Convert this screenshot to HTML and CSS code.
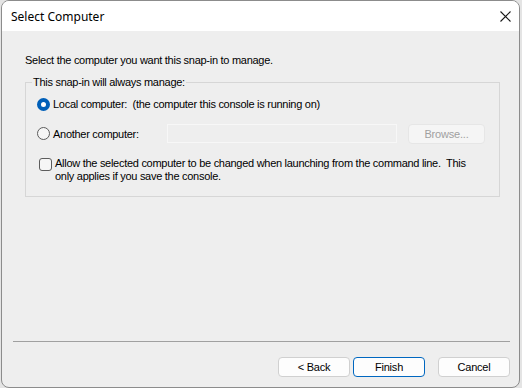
FILE: index.html
```html
<!DOCTYPE html>
<html lang="en">
<head>
  <meta charset="UTF-8">
  <meta name="viewport" content="width=device-width, initial-scale=1.0">
  <title>Select Computer</title>
  <link rel="stylesheet" href="styles.css">
</head>
<body>
  <div class="window">
    <div class="titlebar">
      <span class="title">Select Computer</span>
      <button class="close" aria-label="Close">
        <svg width="11" height="11" viewBox="0 0 11 11">
          <path d="M0.5 0.5 L10.5 10.5 M10.5 0.5 L0.5 10.5" stroke="#1a1a1a" stroke-width="1.1" fill="none"/>
        </svg>
      </button>
    </div>

    <div class="content">
      <p class="intro">Select the computer you want this snap-in to manage.</p>

      <fieldset class="group">
        <legend>This snap-in will always manage:</legend>

        <div class="row first">
          <input type="radio" name="target" id="local" checked>
          <label for="local">Local computer:&nbsp; (the computer this console is running on)</label>
        </div>

        <div class="row second">
          <input type="radio" name="target" id="another">
          <label for="another" class="fixed">Another computer:</label>
          <input type="text" class="computer-name" disabled>
          <button class="btn browse" disabled>Browse...</button>
        </div>

        <div class="row third">
          <input type="checkbox" id="allow">
          <label for="allow">Allow the selected computer to be changed when launching from the command line.&nbsp; This only applies if you save the console.</label>
        </div>
      </fieldset>

      <div class="footer">
        <button class="btn">&lt; Back</button>
        <button class="btn primary">Finish</button>
        <button class="btn cancel">Cancel</button>
      </div>
    </div>
  </div>
</body>
</html>
```

FILE: styles.css
```css
body {
  margin: 0;
  background-color: #e4e4e4;
  font-family: "Liberation Sans", Arial, sans-serif;
  font-size: 11px;
  letter-spacing: -0.28px;
  color: #000;
}

.window {
  box-sizing: border-box;
  width: 519px;
  height: 388px;
  margin-left: 1px;
  border: 1px solid #8c8c8c;
  border-radius: 8px;
  overflow: hidden;
  display: flex;
  flex-direction: column;
  background-color: #eeeeee;
}

.titlebar {
  height: 30px;
  background-color: #fff;
  display: flex;
  align-items: center;
  padding-left: 9px;
  padding-right: 8px;
}

.title {
  font-family: "Noto Sans", sans-serif;
  font-size: 12px;
  letter-spacing: 0;
  flex: 1;
}

.close {
  border: none;
  background: none;
  padding: 0;
  width: 11px;
  height: 11px;
  display: flex;
}

.content {
  flex: 1;
  display: flex;
  flex-direction: column;
  padding: 22px 19px 0 23px;
}

.intro {
  margin: 0;
  line-height: 14px;
}

.group {
  margin: 8px 0 0 0;
  padding: 6px 10px 13px 11px;
  border: 1px solid #d6d6d6;
  min-width: 0;
}

.group legend {
  padding: 0 1px;
  margin-left: -5px;
  line-height: 14px;
}

.row {
  display: flex;
  align-items: center;
}

.row.first {
  height: 18px;
}

.row.second {
  height: 19px;
  margin-top: 11px;
}

.row.third {
  align-items: flex-start;
  margin-top: 14px;
  line-height: 13px;
}

.row label {
  margin-left: 3px;
}

.row.third label {
  max-width: 425px;
}

.row label.fixed {
  width: 114px;
}

input[type="radio"] {
  appearance: none;
  margin: 0;
  width: 13px;
  height: 13px;
  border-radius: 50%;
  border: 1px solid #5c5c5c;
  background-color: #f6f6f6;
  box-sizing: border-box;
}

input[type="radio"]:checked {
  border: 4px solid #005fb8;
  background-color: #fff;
}

input[type="checkbox"] {
  appearance: none;
  margin: 1px 0 0 2px;
  width: 13px;
  height: 13px;
  border-radius: 3px;
  border: 1px solid #5c5c5c;
  background-color: #f6f6f6;
  box-sizing: border-box;
  flex-shrink: 0;
}

.computer-name {
  box-sizing: border-box;
  width: 230px;
  height: 19px;
  border: 1px solid #f7f7f7;
  background-color: #eeeeee;
  margin: 0 11px 0 0;
}

.btn {
  box-sizing: border-box;
  width: 72px;
  height: 20px;
  border: 1px solid #d0d0d0;
  border-radius: 4px;
  background-color: #fdfdfd;
  font-family: "Liberation Sans", Arial, sans-serif;
  font-size: 11px;
  letter-spacing: -0.2px;
  color: #000;
  padding: 0;
}

.btn.browse {
  width: 77px;
  background-color: #f5f5f5;
  border-color: #e6e6e6;
  color: #a0a0a0;
}

.btn.primary {
  border-color: #0067c0;
  margin-left: 3px;
}

.btn.cancel {
  margin-left: 13px;
}

.footer {
  margin: auto -10px 0 -12px;
  border-top: 1px solid #a0a0a0;
  padding: 15px 0 10px 0;
  display: flex;
  justify-content: flex-end;
}
```
